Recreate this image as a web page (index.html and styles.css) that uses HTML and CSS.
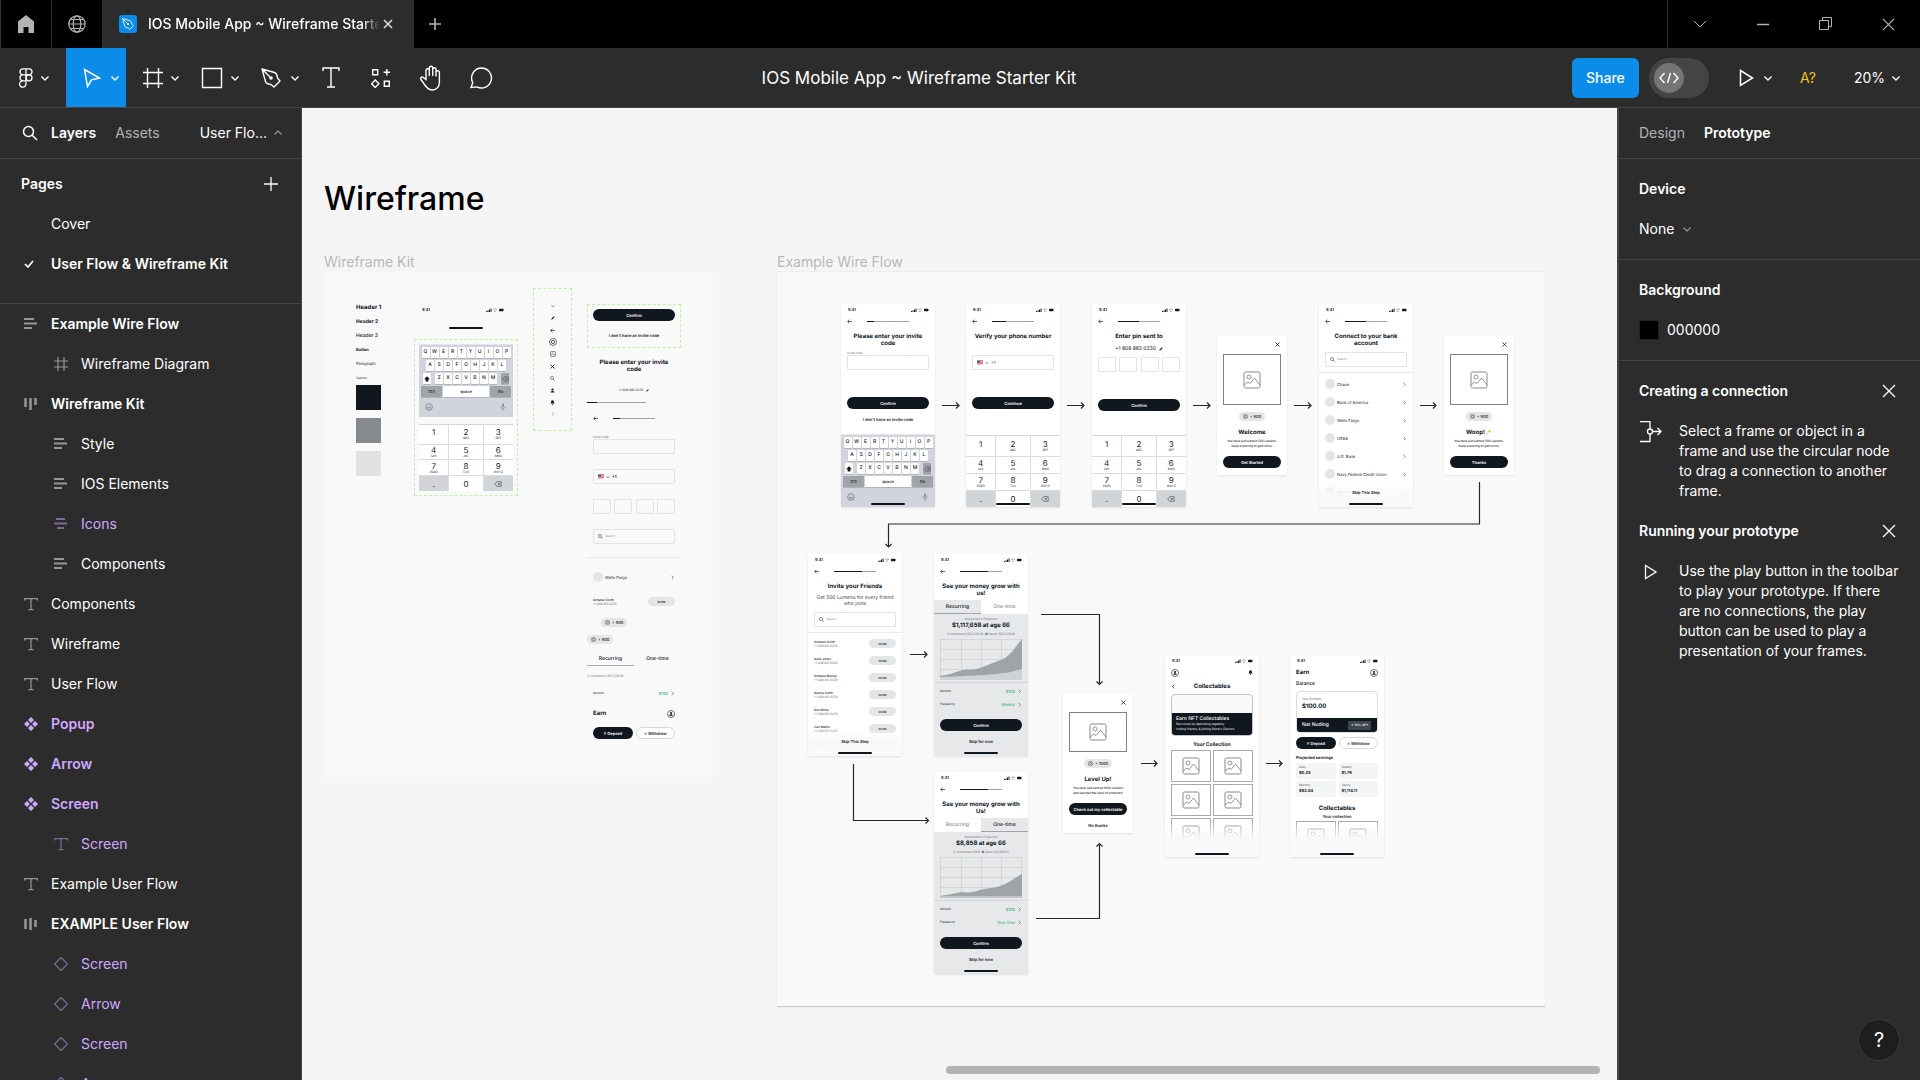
FILE: index.html
```html
<!DOCTYPE html>
<html lang="en">
<head>
<meta charset="utf-8">
<title>IOS Mobile App ~ Wireframe Starter Kit</title>
<link rel="stylesheet" href="styles.css">
</head>
<body>
<svg class="defs" aria-hidden="true">
  <symbol id="chev" viewBox="0 0 10 10"><path d="M1.5 3.5 5 7l3.500-3.500" fill="none" stroke="currentColor" stroke-width="1.400"/></symbol>
  <symbol id="x" viewBox="0 0 14 14"><path d="M1 1l12 12M13 1L1 13" fill="none" stroke="currentColor" stroke-width="1.300"/></symbol>
  <symbol id="plus" viewBox="0 0 14 14"><path d="M7 0v14M0 7h14" fill="none" stroke="currentColor" stroke-width="1.300"/></symbol>
  <symbol id="left" viewBox="0 0 14 12"><path d="M0 1h10M0 5.500h13M0 10h8" fill="none" stroke="currentColor" stroke-width="2"/></symbol>
  <symbol id="mid" viewBox="0 0 14 12"><path d="M2 1h9M0 5.500h13M3 10h7" fill="none" stroke="currentColor" stroke-width="2"/></symbol>
  <symbol id="cols" viewBox="0 0 14 12"><path d="M1.500 0v9M6.500 0v12M11.500 0v7" fill="none" stroke="currentColor" stroke-width="2.500"/></symbol>
  <symbol id="colsmid" viewBox="0 0 14 12"><path d="M1.500 1v10M6.500 0v12M11.500 2v7" fill="none" stroke="currentColor" stroke-width="2.500"/></symbol>
  <symbol id="hash" viewBox="0 0 14 14"><path d="M4 0v14M10 0v14M0 4h14M0 10h14" fill="none" stroke="currentColor" stroke-width="1.200"/></symbol>
  <symbol id="tee" viewBox="0 0 14 14"><path d="M.6 3.500V1.600h12.800v1.900M7 1.600v11M4.500 12.600h5" fill="none" stroke="currentColor" stroke-width="1.200"/></symbol>
  <symbol id="comp" viewBox="0 0 14 14"><path d="M7 0l3 3-3 3-3-3zM7 8l3 3-3 3-3-3zM3 4l3 3-3 3-3-3zM11 4l3 3-3 3-3-3z" fill="currentColor"/></symbol>
  <symbol id="inst" viewBox="0 0 14 14"><path d="M7 .5L13.500 7 7 13.500.5 7z" fill="none" stroke="currentColor" stroke-width="1.200"/></symbol>
  <symbol id="play" viewBox="0 0 14 18"><path d="M1 1.500L13 9 1 16.500z" fill="none" stroke="currentColor" stroke-width="1.500"/></symbol>
  <symbol id="pen" viewBox="0 0 20 20"><path d="M1 1l3.500 12.500c.5 1.800 2 2.600 5.500 3l3 2.500 6-6-2.500-3c-.4-3.500-1.200-5-3-5.500zM1 1l8 8" fill="none" stroke="currentColor" stroke-width="1.400" stroke-linejoin="round"/><circle cx="10" cy="10" r="1.800" fill="currentColor"/></symbol>
  <symbol id="search" viewBox="0 0 16 16"><circle cx="6.500" cy="6.500" r="5" fill="none" stroke="currentColor" stroke-width="1.500"/><path d="M10.200 10.200L15 15" stroke="currentColor" stroke-width="1.500"/></symbol>
  <symbol id="signal" viewBox="0 0 18 4"><path d="M0 4V3h1v1zM1.500 4V2.200h1V4zM3 4V1.400h1V4zM4.500 4V.5h1V4z" fill="#10171f"/><path d="M7 2c1.500-1.500 3-1.500 4 0M8 3.200h2" fill="none" stroke="#8a8f95" stroke-width=".8"/><rect x="13" y=".7" width="4.500" height="2.600" rx=".7" fill="#10171f"/></symbol>
  <symbol id="back" viewBox="0 0 6 6"><path d="M6 3H1M3 .8L.8 3 3 5.200" fill="none" stroke="#10171f" stroke-width=".8"/></symbol>
  <symbol id="pic" viewBox="0 0 18 18"><rect x="1" y="1" width="16" height="16" rx="1.500" fill="none" stroke="#858a8d" stroke-width="1"/><circle cx="6" cy="6" r="2" fill="none" stroke="#858a8d" stroke-width=".9"/><path d="M1 14l4-3 2 1.500L11.500 7l5.500 7" fill="none" stroke="#858a8d" stroke-width=".9"/></symbol>
  <symbol id="picsm" viewBox="0 0 6 6"><rect x=".6" y=".6" width="4.800" height="4.800" rx=".5" fill="none" stroke="#555b60" stroke-width=".7"/><path d="M1 4l1.500-1 2.500 1M2 2h1" fill="none" stroke="#555b60" stroke-width=".6"/></symbol>
  <symbol id="user" viewBox="0 0 8 8"><circle cx="4" cy="4" r="3.500" fill="none" stroke="#10171f" stroke-width=".6"/><circle cx="4" cy="3" r="1" fill="#10171f"/><path d="M2.200 5.700c0-2 3.600-2 3.600 0z" fill="#10171f"/></symbol>
  <symbol id="person" viewBox="0 0 5 5"><circle cx="2.500" cy="1.500" r="1.100" fill="#10171f"/><path d="M.5 4.600c0-2.300 4-2.300 4 0z" fill="#10171f"/></symbol>
  <symbol id="coin" viewBox="0 0 8 8"><circle cx="4" cy="4" r="3.500" fill="none" stroke="#30363c" stroke-width=".7"/><circle cx="4" cy="4" r="1.600" fill="none" stroke="#30363c" stroke-width=".8"/></symbol>
  <symbol id="del" viewBox="0 0 9 7"><path d="M.6 3.500L3 .8h5.200v5.400H3zM4.300 2.200l2.500 2.600M6.800 2.200L4.300 4.800" fill="none" stroke="#3d4348" stroke-width=".7"/></symbol>
  <symbol id="face" viewBox="0 0 8 8"><circle cx="4" cy="4" r="3.400" fill="none" stroke="#70757d" stroke-width=".7"/><path d="M2.200 4.500h3.600c-.4 2-3.200 2-3.600 0M2.800 2.500v.8M5.200 2.500v.8" fill="none" stroke="#70757d" stroke-width=".6"/></symbol>
  <symbol id="mic" viewBox="0 0 8 8"><rect x="3" y=".5" width="2" height="4" rx="1" fill="#8c919a"/><path d="M1.800 3.500c0 3 4.400 3 4.400 0M4 5.800v2" fill="none" stroke="#70757d" stroke-width=".6"/></symbol>
  <symbol id="shift" viewBox="0 0 6 6"><path d="M3 .3L5.900 3.200H4.400v2.300H1.600V3.200H.1z" fill="#10171f"/></symbol>
  <symbol id="flag" viewBox="0 0 6 5"><path d="M0 .8l6-.6v3.800l-6 .6z" fill="#f3c8c8"/><path d="M0 1l6-.5M0 2.500L6 2M0 4.100l6-.6" stroke="#d4504f" stroke-width=".8"/><path d="M0 .8l3-.3v2L0 2.800z" fill="#3d5fa8"/></symbol>
  <symbol id="pencil" viewBox="0 0 5 5"><path d="M.3 4.700l.5-1.600L3.600.4l1 1-2.800 2.800z" fill="#10171f"/></symbol>
  <symbol id="bell" viewBox="0 0 5 5"><path d="M2.500.2c1.300 0 1.500 1 1.500 2.300l.6 1H.4l.6-1C1 1.200 1.200.2 2.500.2zM1.900 4h1.200v.8H1.900z" fill="#10171f"/></symbol>
</svg>

<header class="tabs">
  <button class="tab-ico" aria-label="Home"><svg width="16" height="18" viewBox="0 0 16 18"><path d="M8 0l8 6.500V18h-5.500v-6h-5v6H0V6.500z" fill="#b3b3b3"/></svg></button>
  <button class="tab-ico" aria-label="Community"><svg width="18" height="18" viewBox="0 0 18 18" fill="none" stroke="#b3b3b3" stroke-width="1.200"><circle cx="9" cy="9" r="8.200"/><ellipse cx="9" cy="9" rx="3.800" ry="8.200"/><path d="M1 9h16M2.500 4.500h13M2.500 13.500h13" stroke-width="1"/></svg></button>
  <div class="tab">
    <span class="tab-logo"><svg width="12" height="12"><use href="#pen"/></svg></span>
    <span class="tab-name">IOS Mobile App ~ Wireframe Starter Kit</span>
    <button class="tab-x" aria-label="Close tab"><svg width="10" height="10" viewBox="0 0 10 10"><path d="M1 1l8 8M9 1L1 9" stroke="#d9d9d9" stroke-width="1.700"/></svg></button>
  </div>
  <button class="tab-new" aria-label="New tab"><svg width="12" height="12" viewBox="0 0 12 12"><path d="M6 0v12M0 6h12" stroke="#b3b3b3" stroke-width="1.600"/></svg></button>
  <nav class="win">
    <button aria-label="Tabs"><svg width="14" height="10" viewBox="0 0 14 10" fill="none" stroke="#b3b3b3"><path d="M1 2l6 6 6-6"/></svg></button>
    <button aria-label="Minimize"><svg width="12" height="10" viewBox="0 0 12 10"><path d="M0 5.500h12" stroke="#b3b3b3" stroke-width="1.500"/></svg></button>
    <button aria-label="Restore"><svg width="14" height="14" viewBox="0 0 14 14" fill="none" stroke="#b3b3b3"><path d="M.5 3.500h9v9h-9zM3.500 3V.5h9v9H10"/></svg></button>
    <button aria-label="Close"><svg width="13" height="13" color="#b3b3b3"><use href="#x"/></svg></button>
  </nav>
</header>

<div class="toolbar">
  <button class="tool menu" aria-label="Main menu"><svg width="14" height="20" viewBox="0 0 14 20" fill="none" stroke="#fff" stroke-width="1.300"><path d="M7 .8H4a3 3 0 000 6h3zM7 .8h3a3 3 0 010 6H7zM7 6.800H4a3 3 0 000 6h3zM7 12.800H4a3.200 3.200 0 103 3.200z"/><circle cx="10" cy="9.800" r="3"/></svg><svg width="10" height="10"><use href="#chev"/></svg></button>
  <button class="tool on" aria-label="Move"><svg width="18" height="20" viewBox="0 0 18 20"><path d="M1.500 1.500l15 8.500-8 1.800-4 6.700z" fill="none" stroke="#fff" stroke-width="1.500"/></svg><svg width="10" height="10"><use href="#chev"/></svg></button>
  <button class="tool near" aria-label="Frame"><svg width="20" height="20" viewBox="0 0 20 20"><path d="M4.500 0v20M15.500 0v20M0 4.500h20M0 15.500h20" stroke="#fff" stroke-width="1.400"/></svg><svg width="10" height="10"><use href="#chev"/></svg></button>
  <button class="tool near" aria-label="Rectangle"><svg width="22" height="22" viewBox="0 0 22 22"><path d="M1.500 1.500h19v19h-19z" fill="none" stroke="#fff" stroke-width="1.400"/></svg><svg width="10" height="10"><use href="#chev"/></svg></button>
  <button class="tool" aria-label="Pen"><svg width="20" height="20"><use href="#pen"/></svg><svg width="10" height="10"><use href="#chev"/></svg></button>
  <button class="tool one" aria-label="Text"><svg width="18" height="21" viewBox="0 0 18 21"><path d="M1 4V1h16v3M9 1v19M5 20h8" fill="none" stroke="#fff" stroke-width="1.400"/></svg></button>
  <button class="tool one" aria-label="Resources"><svg width="20" height="20" viewBox="0 0 20 20" fill="none" stroke="#fff" stroke-width="1.400"><path d="M1.700 1.700h5v5h-5zM13.300 13.300h5v5h-5zM15.800 1v6.400M12.600 4.200H19M4.200 12l3.700 3.800-3.700 3.700L.6 15.800z"/></svg></button>
  <button class="tool one" aria-label="Hand"><svg width="24" height="26" viewBox="0 0 24 26" fill="none" stroke="#fff" stroke-width="1.400"><path d="M7 14.500V5a1.700 1.700 0 013.300 0V11 3a1.700 1.700 0 013.400 0v8V4a1.700 1.700 0 013.300 0v7.500V7.500a1.700 1.700 0 013.400 0V17c0 5-3 8-7 8s-5.500-2-7.500-5l-4-5.500c-1-1.800 1-3.200 2.500-2z"/></svg></button>
  <button class="tool one" aria-label="Comment"><svg width="24" height="22" viewBox="0 0 24 22"><path d="M12.500 1a10 10 0 11-4.600 18.900L2 20.500l1.800-4.800A10 10 0 0112.500 1z" fill="none" stroke="#fff" stroke-width="1.400"/></svg></button>
  <h1 class="doc">IOS Mobile App ~ Wireframe Starter Kit</h1>
  <div class="right-tools">
    <button class="share">Share</button>
    <button class="dev" aria-label="Dev Mode"><span class="knob"><svg width="20" height="12" viewBox="0 0 20 12" fill="none" stroke="#fff" stroke-width="1.400"><path d="M5.500 1L1 6l4.500 5M14.500 1L19 6l-4.500 5M11.500 1l-3 10"/></svg></span></button>
    <button class="tool present" aria-label="Present"><svg width="15" height="18"><use href="#play"/></svg><svg width="10" height="10"><use href="#chev"/></svg></button>
    <button class="fonts">A?</button>
    <button class="zoom">20%<svg width="10" height="10"><use href="#chev"/></svg></button>
  </div>
</div>

<main class="work">
<aside class="side">
  <div class="side-head">
    <svg width="16" height="16"><use href="#search"/></svg>
    <button class="b">Layers</button><button class="dim">Assets</button>
    <button class="page-pick">User Flo...<svg class="up" width="10" height="10"><use href="#chev"/></svg></button>
  </div>
  <section class="pages">
    <div class="pages-top"><h2>Pages</h2><button aria-label="Add page"><svg width="14" height="14"><use href="#plus"/></svg></button></div>
    <button class="page"><span class="tick"></span>Cover</button>
    <button class="page b"><span class="tick"><svg width="10" height="8" viewBox="0 0 10 8"><path d="M1 4l3 3 5-6" fill="none" stroke="#fff" stroke-width="1.700"/></svg></span>User Flow &amp; Wireframe Kit</button>
  </section>
  <ul class="layers">
    <li class="b"><svg><use href="#left"/></svg>Example Wire Flow</li>
    <li class="in"><svg><use href="#hash"/></svg>Wireframe Diagram</li>
    <li class="b"><svg><use href="#cols"/></svg>Wireframe Kit</li>
    <li class="in"><svg><use href="#left"/></svg>Style</li>
    <li class="in"><svg><use href="#left"/></svg>IOS Elements</li>
    <li class="in pur"><svg><use href="#mid"/></svg>Icons</li>
    <li class="in"><svg><use href="#left"/></svg>Components</li>
    <li><svg><use href="#tee"/></svg>Components</li>
    <li><svg><use href="#tee"/></svg>Wireframe</li>
    <li><svg><use href="#tee"/></svg>User Flow</li>
    <li class="b pur full"><svg><use href="#comp"/></svg>Popup</li>
    <li class="b pur full"><svg><use href="#comp"/></svg>Arrow</li>
    <li class="b pur full"><svg><use href="#comp"/></svg>Screen</li>
    <li class="in pur"><svg><use href="#tee"/></svg>Screen</li>
    <li><svg><use href="#tee"/></svg>Example User Flow</li>
    <li class="b"><svg><use href="#colsmid"/></svg>EXAMPLE User Flow</li>
    <li class="in pur"><svg><use href="#inst"/></svg>Screen</li>
    <li class="in pur"><svg><use href="#inst"/></svg>Arrow</li>
    <li class="in pur"><svg><use href="#inst"/></svg>Screen</li>
    <li class="in pur"><svg><use href="#inst"/></svg>Arrow</li>
  </ul>
</aside>

<section class="canvas">
  <h2 class="big">Wireframe</h2>
  <span class="label kit-label">Wireframe Kit</span>
  <span class="label flow-label">Example Wire Flow</span>

  <div class="frame kit">
    <div class="styles">
      <p class="h1">Header 1</p><p class="h2">Header 2</p><p class="h3">Header 3</p><p class="bt">Button</p><p class="pa">Paragraph</p><p class="ca">Caption</p>
      <i class="sw ink"></i><i class="sw mid"></i><i class="sw pale"></i>
    </div>
    <div class="ios">
      <div class="stat"><b>9:41</b><svg width="18" height="4"><use href="#signal"/></svg></div>
      <i class="home"></i>
      <div class="dash">
        <div class="kb"><div><b>Q</b><b>W</b><b>E</b><b>R</b><b>T</b><b>Y</b><b>U</b><b>I</b><b>O</b><b>P</b></div><div><b>A</b><b>S</b><b>D</b><b>F</b><b>G</b><b>H</b><b>J</b><b>K</b><b>L</b></div><div><b><svg width="6" height="6"><use href="#shift"/></svg></b><b class="gp">Z</b><b>X</b><b>C</b><b>V</b><b>B</b><b>N</b><b>M</b><b class="dk gp"><svg width="7" height="6"><use href="#del"/></svg></b></div><div class="sp"><b class="dk">123</b><b class="space">space</b><b class="dk">Go</b></div><div class="end"><svg width="8" height="8"><use href="#face"/></svg><svg width="8" height="8"><use href="#mic"/></svg></div></div>
        <div class="pad"><span>1</span><span>2<small>ABC</small></span><span>3<small>DEF</small></span><span>4<small>GHI</small></span><span>5<small>JKL</small></span><span>6<small>MNO</small></span><span>7<small>PQRS</small></span><span>8<small>TUV</small></span><span>9<small>WXYZ</small></span><span class="dk">.</span><span>0</span><span class="dk"><svg width="8" height="6"><use href="#del"/></svg></span></div>
      </div>
    </div>
    <div class="icons">
      <svg width="4" height="4"><use href="#chev"/></svg><svg width="4" height="4"><use href="#pencil"/></svg><svg width="5" height="5"><use href="#back"/></svg><svg width="8" height="8"><use href="#coin"/></svg><svg width="6" height="6"><use href="#picsm"/></svg><svg width="5" height="5" viewBox="0 0 5 5"><path d="M.5.5l4 4M4.500.5l-4 4" stroke="#10171f" stroke-width=".8"/></svg><svg width="5" height="5"><use href="#search"/></svg><svg width="5" height="5"><use href="#person"/></svg><svg width="5" height="5"><use href="#bell"/></svg><svg class="rt" width="4" height="4"><use href="#chev"/></svg>
    </div>
    <div class="parts">
      <div class="dash2"><button class="pill">Confirm</button><a class="link" href="#">I don't have an invite code</a></div>
      <h3 class="ttl">Please enter your invite code</h3>
      <p class="num sm">+1 808 883 0330 <svg width="3" height="3"><use href="#pencil"/></svg></p>
      <i class="bar wide"></i>
      <div class="nav in6"><svg width="5" height="5"><use href="#back"/></svg><i class="bar p15"></i></div>
      <label class="fld in6 g10">Invite code<input class="box"></label>
      <div class="tel in6"><svg width="6" height="5"><use href="#flag"/></svg><svg width="4" height="4"><use href="#chev"/></svg><b>+1</b></div>
      <div class="pins in6"><input aria-label="Digit 1"><input aria-label="Digit 2"><input aria-label="Digit 3"><input aria-label="Digit 4"></div>
      <label class="find in6"><svg width="5" height="5"><use href="#search"/></svg><input placeholder="Search" aria-label="Search"></label>
      <hr>
      <div class="bank in6"><i></i>Wells Fargo<svg class="rt" width="5" height="5"><use href="#chev"/></svg></div>
      <div class="friend in6"><span><b>Annabel Smith</b>+1 209 813 0274</span><button>Invite</button></div>
      <span class="chip off"><svg width="5" height="5"><use href="#coin"/></svg>+ 500</span>
      <span class="chip"><svg width="5" height="5"><use href="#coin"/></svg>+ 500</span>
      <div class="seg plain"><b>Recurring</b><b>One-time</b></div>
      <p class="leg">○ Investment $50,278.06</p>
      <div class="opt in6">Amount<em>$100</em><svg class="rt" width="5" height="5"><use href="#chev"/></svg></div>
      <div class="who in6"><b>Earn</b><svg width="8" height="8"><use href="#user"/></svg></div>
      <div class="duo in6"><button class="pill">↗ Deposit</button><button class="pill ghost">↘ Withdraw</button></div>
    </div>
  </div>

  <div class="frame flow">
    <svg class="wires" width="768" height="734" viewBox="777 272 768 734" fill="none" stroke="#26292c" stroke-width="1.200">
      <path d="M942 405.500h17M956 402.500l3 3-3 3M1067 405.500h17M1081 402.500l3 3-3 3M1193 405.500h17M1207 402.500l3 3-3 3M1294 405.500h17M1308 402.500l3 3-3 3M1420 405.500h16M1433 402.500l3 3-3 3"/>
      <path d="M1479.500 482v42H888.500v23M885.500 544l3 3 3-3M910 654.500h17M924 651.500l3 3-3 3M1041 614.500h58.500v70M1096.500 681.500l3 3 3-3M853.500 764v56.500h75M925.500 817.500l3 3-3 3M1036 918.500h63.500V843M1096.500 846.500l3-3 3 3M1141 763.500h16M1154 760.500l3 3-3 3M1266 763.500h16M1279 760.500l3 3-3 3"/>
    </svg>

    <article class="phone s1">
      <div class="stat"><b>9:41</b><svg width="18" height="4"><use href="#signal"/></svg></div>
      <div class="nav"><svg width="5" height="5"><use href="#back"/></svg><i class="bar p15"></i></div>
      <h3 class="ttl">Please enter your invite code</h3>
      <label class="fld g4">Invite code<input class="box"></label>
      <button class="pill g27">Confirm</button>
      <a class="link" href="#">I don't have an invite code</a>
      <div class="kb"><div><b>Q</b><b>W</b><b>E</b><b>R</b><b>T</b><b>Y</b><b>U</b><b>I</b><b>O</b><b>P</b></div><div><b>A</b><b>S</b><b>D</b><b>F</b><b>G</b><b>H</b><b>J</b><b>K</b><b>L</b></div><div><b><svg width="6" height="6"><use href="#shift"/></svg></b><b class="gp">Z</b><b>X</b><b>C</b><b>V</b><b>B</b><b>N</b><b>M</b><b class="dk gp"><svg width="7" height="6"><use href="#del"/></svg></b></div><div class="sp"><b class="dk">123</b><b class="space">space</b><b class="dk">Go</b></div><div class="end"><svg width="8" height="8"><use href="#face"/></svg><svg width="8" height="8"><use href="#mic"/></svg></div></div>
      <i class="home over"></i>
    </article>

    <article class="phone s2">
      <div class="stat"><b>9:41</b><svg width="18" height="4"><use href="#signal"/></svg></div>
      <div class="nav"><svg width="5" height="5"><use href="#back"/></svg><i class="bar p33"></i></div>
      <h3 class="ttl">Verify your phone number</h3>
      <div class="tel g15"><svg width="6" height="5"><use href="#flag"/></svg><svg width="4" height="4"><use href="#chev"/></svg>+1</div>
      <button class="pill g27">Continue</button>
      <div class="pad"><span>1</span><span>2<small>ABC</small></span><span>3<small>DEF</small></span><span>4<small>GHI</small></span><span>5<small>JKL</small></span><span>6<small>MNO</small></span><span>7<small>PQRS</small></span><span>8<small>TUV</small></span><span>9<small>WXYZ</small></span><span class="dk">.</span><span>0</span><span class="dk"><svg width="8" height="6"><use href="#del"/></svg></span></div>
      <i class="home over"></i>
    </article>

    <article class="phone s3">
      <div class="stat"><b>9:41</b><svg width="18" height="4"><use href="#signal"/></svg></div>
      <div class="nav"><svg width="5" height="5"><use href="#back"/></svg><i class="bar p50"></i></div>
      <h3 class="ttl">Enter pin sent to</h3>
      <p class="num">+1 808 883 0330 <svg width="4" height="4"><use href="#pencil"/></svg></p>
      <div class="pins"><input aria-label="Digit 1"><input aria-label="Digit 2"><input aria-label="Digit 3"><input aria-label="Digit 4"></div>
      <button class="pill g27">Confirm</button>
      <div class="pad"><span>1</span><span>2<small>ABC</small></span><span>3<small>DEF</small></span><span>4<small>GHI</small></span><span>5<small>JKL</small></span><span>6<small>MNO</small></span><span>7<small>PQRS</small></span><span>8<small>TUV</small></span><span>9<small>WXYZ</small></span><span class="dk">.</span><span>0</span><span class="dk"><svg width="8" height="6"><use href="#del"/></svg></span></div>
      <i class="home over"></i>
    </article>

    <article class="pop s4">
      <button class="close" aria-label="Close"><svg width="5" height="5" viewBox="0 0 5 5"><path d="M.5.5l4 4M4.500.5l-4 4" stroke="#10171f" stroke-width=".8"/></svg></button>
      <div class="img"><svg width="18" height="18"><use href="#pic"/></svg></div>
      <span class="chip"><svg width="5" height="5"><use href="#coin"/></svg>+ 500</span>
      <h3>Welcome</h3>
      <p>You have just earned 500 Lumens. Keep exploring to gain more.</p>
      <button class="pill">Get Started</button>
    </article>

    <article class="phone s5">
      <div class="stat"><b>9:41</b><svg width="18" height="4"><use href="#signal"/></svg></div>
      <div class="nav"><svg width="5" height="5"><use href="#back"/></svg><i class="bar p50"></i></div>
      <h3 class="ttl">Connect to your bank account</h3>
      <label class="find"><svg width="5" height="5"><use href="#search"/></svg><input placeholder="Search" aria-label="Search bank"></label>
      <hr>
      <div class="bank"><i></i>Chase<svg class="rt" width="5" height="5"><use href="#chev"/></svg></div>
      <div class="bank"><i></i>Bank of America<svg class="rt" width="5" height="5"><use href="#chev"/></svg></div>
      <div class="bank"><i></i>Wells Fargo<svg class="rt" width="5" height="5"><use href="#chev"/></svg></div>
      <div class="bank"><i></i>USAA<svg class="rt" width="5" height="5"><use href="#chev"/></svg></div>
      <div class="bank"><i></i>U.S. Bank<svg class="rt" width="5" height="5"><use href="#chev"/></svg></div>
      <div class="bank"><i></i>Navy Federal Credit Union<svg class="rt" width="5" height="5"><use href="#chev"/></svg></div>
      <div class="bank"><i></i>Wells Fargo<svg class="rt" width="5" height="5"><use href="#chev"/></svg></div>
      <div class="fade">Skip This Step</div>
      <i class="home over"></i>
    </article>

    <article class="pop s6">
      <button class="close" aria-label="Close"><svg width="5" height="5" viewBox="0 0 5 5"><path d="M.5.5l4 4M4.500.5l-4 4" stroke="#10171f" stroke-width=".8"/></svg></button>
      <div class="img"><svg width="18" height="18"><use href="#pic"/></svg></div>
      <span class="chip"><svg width="5" height="5"><use href="#coin"/></svg>+ 500</span>
      <h3>Woop! <svg width="6" height="6" viewBox="0 0 6 6"><path d="M3.500 0l.6 2 1.900.5-1.900.6-.6 2-.6-2L1 2.500 2.900 2zM1 3.500l.3 1 1 .3-1 .4-.3.800-.3-.8-.7-.4.700-.3z" fill="#f5c542"/></svg></h3>
      <p>You have just earned 500 Lumens. Keep exploring to gain more.</p>
      <button class="pill">Thanks</button>
    </article>

    <article class="phone short s7">
      <div class="stat"><b>9:41</b><svg width="18" height="4"><use href="#signal"/></svg></div>
      <div class="nav"><svg width="5" height="5"><use href="#back"/></svg><i class="bar p66"></i></div>
      <h3 class="ttl">Invite your Friends</h3>
      <p class="sub">Get 500 Lumens for every friend who joins</p>
      <label class="find"><svg width="5" height="5"><use href="#search"/></svg><input placeholder="Search" aria-label="Search friends"></label>
      <hr>
      <div class="friend"><span><b>Annabel Smith</b>+1 209 813 0274</span><button>Invite</button></div>
      <div class="friend"><span><b>Aarik Jones</b>+1 209 813 0274</span><button>Invite</button></div>
      <div class="friend"><span><b>Annabel Murray</b>+1 209 813 0274</span><button>Invite</button></div>
      <div class="friend"><span><b>Bianca Smith</b>+1 209 813 0274</span><button>Invite</button></div>
      <div class="friend"><span><b>Ben White</b>+1 209 813 0274</span><button>Invite</button></div>
      <div class="friend"><span><b>Carl Martin</b>+1 209 813 0274</span><button>Invite</button></div>
      <div class="friend"><span><b>Annabel Smith</b>+1 209 813 0274</span><button>Invite</button></div>
      <div class="fade">Skip This Step</div>
      <i class="home over"></i>
    </article>

    <article class="phone short grey s8">
      <div class="stat"><b>9:41</b><svg width="18" height="4"><use href="#signal"/></svg></div>
      <div class="nav"><svg width="5" height="5"><use href="#back"/></svg><i class="bar p66"></i></div>
      <h3 class="ttl">See your money grow with us!</h3>
      <div class="seg"><b class="sel">Recurring</b><b>One-time</b></div>
      <p class="leg c">Appreciation Projection</p>
      <h3 class="sum">$1,117,658 at age 66</h3>
      <p class="leg c">○ Investment $50,278.06 &nbsp;● Return $50,278.06</p>
      <svg class="chart" width="82" height="41" viewBox="0 0 82 41"><path d="M.5 0v41M21.500 0v41M41.500 0v41M61.500 0v41M0 .5h82M0 10.500h82M0 20.500h82M0 30.500h82M81.500 0v41" stroke="#cfd2d4" stroke-width=".8"/><path d="M0 37C30 39 60 34 82 29V41H0z" fill="#cfd3d5"/><path d="M0 37c9-1 15-4 23-6 7-1 12 0 17-2 8-3 15-6 23-9 8-4 12-12 19-20v30c-8 2-12 4-19 4-20 3-40 3-63 4z" fill="#9fa5a7"/></svg>
      <hr>
      <div class="opt">Amount<em>$100</em><svg class="rt" width="5" height="5"><use href="#chev"/></svg></div>
      <div class="opt">Frequency<em>Weekly</em><svg class="rt" width="5" height="5"><use href="#chev"/></svg></div>
      <button class="pill g8">Confirm</button>
      <a class="link" href="#">Skip for now</a>
      <i class="home over"></i>
    </article>

    <article class="phone short grey s9">
      <div class="stat"><b>9:41</b><svg width="18" height="4"><use href="#signal"/></svg></div>
      <div class="nav"><svg width="5" height="5"><use href="#back"/></svg><i class="bar p66"></i></div>
      <h3 class="ttl">See your money grow with Us!</h3>
      <div class="seg"><b>Recurring</b><b class="sel">One-time</b></div>
      <p class="leg c">Appreciation Projection</p>
      <h3 class="sum">$8,858 at age 66</h3>
      <p class="leg c">○ Investment $100 &nbsp;● Return $1,060.87</p>
      <svg class="chart" width="82" height="41" viewBox="0 0 82 41"><path d="M.5 0v41M21.500 0v41M41.500 0v41M61.500 0v41M0 .5h82M0 10.500h82M0 20.500h82M0 30.500h82M81.500 0v41" stroke="#cfd2d4" stroke-width=".8"/><path d="M0 39h82v2H0z" fill="#c3c7c9"/><path d="M0 39c9-1 15-3 22-4 7 1 12 0 18-2 8-2 14-2 20-4 9-3 14-8 22-12v22z" fill="#9fa5a7"/></svg>
      <hr>
      <div class="opt">Amount<em>$100</em><svg class="rt" width="5" height="5"><use href="#chev"/></svg></div>
      <div class="opt">Frequency<em>One-time</em><svg class="rt" width="5" height="5"><use href="#chev"/></svg></div>
      <button class="pill g8">Confirm</button>
      <a class="link" href="#">Skip for now</a>
      <i class="home over"></i>
    </article>

    <article class="pop s10">
      <button class="close" aria-label="Close"><svg width="5" height="5" viewBox="0 0 5 5"><path d="M.5.5l4 4M4.500.5l-4 4" stroke="#10171f" stroke-width=".8"/></svg></button>
      <div class="img low"><svg width="18" height="18"><use href="#pic"/></svg></div>
      <span class="chip"><svg width="5" height="5"><use href="#coin"/></svg>+ 1000</span>
      <h3>Level Up!</h3>
      <p>You have just earned 1000 Lumens and reached the level of protector!</p>
      <button class="pill">Check out my collectable</button>
      <a class="link" href="#">No thanks</a>
    </article>

    <article class="phone short s11">
      <div class="stat"><b>9:41</b><svg width="18" height="4"><use href="#signal"/></svg></div>
      <div class="who"><svg width="8" height="8"><use href="#user"/></svg><svg width="5" height="5"><use href="#bell"/></svg></div>
      <h3 class="ttl one"><svg class="lt" width="5" height="5"><use href="#chev"/></svg>Collectables</h3>
      <div class="card nft"><div class="dark"><b>Earn NFT Collectables</b>Earn more by depositing regularly,<br>inviting friends, &amp; joining Boost's Discord</div></div>
      <h4>Your Collection</h4>
      <div class="cells"><i><svg width="18" height="18"><use href="#pic"/></svg></i><i><svg width="18" height="18"><use href="#pic"/></svg></i><i><svg width="18" height="18"><use href="#pic"/></svg></i><i><svg width="18" height="18"><use href="#pic"/></svg></i><i><svg width="18" height="18"><use href="#pic"/></svg></i><i><svg width="18" height="18"><use href="#pic"/></svg></i></div>
      <div class="fade tall"></div>
      <i class="home over"></i>
    </article>

    <article class="phone short s12">
      <div class="stat"><b>9:41</b><svg width="18" height="4"><use href="#signal"/></svg></div>
      <div class="who"><b>Earn</b><svg width="8" height="8"><use href="#user"/></svg></div>
      <h5>Balance</h5>
      <div class="card bal"><small>Your Portfolio</small><b>$100.00</b><div class="dark"><span>Nat Nuding</span><em>✦ 30% APY</em></div></div>
      <div class="duo"><button class="pill">↗ Deposit</button><button class="pill ghost">↘ Withdraw</button></div>
      <h6>Projected earnings</h6>
      <div class="stats"><span>Daily<b>$0.25</b></span><span>Weekly<b>$1.76</b></span><span>Monthly<b>$92.84</b></span><span>Yearly<b>$1,114.11</b></span></div>
      <h3 class="col">Collectables</h3>
      <p class="yc">Your collection</p>
      <div class="cells"><i><svg width="18" height="18"><use href="#pic"/></svg></i><i><svg width="18" height="18"><use href="#pic"/></svg></i></div>
      <div class="fade tall"></div>
      <i class="home over"></i>
    </article>
  </div>
  <i class="scroll"></i>
</section>

<aside class="props">
  <div class="side-head"><button class="dim">Design</button><button class="b">Prototype</button></div>
  <section><h2>Device</h2><button class="row">None<svg class="faint" width="10" height="10"><use href="#chev"/></svg></button></section>
  <section><h2>Background</h2><button class="row"><i class="swatch"></i>000000</button></section>
  <section class="tips">
    <h2>Creating a connection<button aria-label="Dismiss"><svg width="14" height="14"><use href="#x"/></svg></button></h2>
    <div class="tip"><svg width="24" height="24" viewBox="0 0 24 24" fill="none" stroke="#fff" stroke-width="1.300"><path d="M1 .5h10V8M11 13v7.500H1M13.500 10.500H22M18.500 7l3.500 3.500-3.500 3.500"/><circle cx="11" cy="10.500" r="2.500"/></svg><p>Select a frame or object in a frame and use the circular node to drag a connection to another frame.</p></div>
    <h2>Running your prototype<button aria-label="Dismiss"><svg width="14" height="14"><use href="#x"/></svg></button></h2>
    <div class="tip"><svg width="24" height="24" viewBox="0 0 24 24"><path d="M6.500 4.500v13L17 11z" fill="none" stroke="#fff" stroke-width="1.300"/></svg><p>Use the play button in the toolbar to play your prototype. If there are no connections, the play button can be used to play a presentation of your frames.</p></div>
  </section>
  <button class="help" aria-label="Help">?</button>
</aside>
</main>
</body>
</html>
```
FILE: styles.css
```css
* { box-sizing: border-box; margin: 0; padding: 0; }
body {
  height: 100vh; overflow: hidden; display: grid; grid-template-rows: 48px 60px minmax(0, 1fr);
  background: #2c2c2c; color: #fff; font: 14px/20px Inter, "Liberation Sans", sans-serif;
}
button, input { font: inherit; color: inherit; background: none; border: 0; text-align: inherit; text-rendering: inherit; }
svg { flex: none; display: block; }
.defs { position: absolute; width: 0; height: 0; }
.b, h2 { font-weight: 600; }
h2 { font-size: 14px; }
.dim { color: #b3b3b3; }

/* window tabs */
.tabs { display: flex; background: #000; border-left: 1px solid #333; }
.tabs button { display: grid; place-items: center; }
.tab-ico { width: 51px; border-right: 1px solid #333; }
.tab { width: 311px; display: flex; align-items: center; background: #2c2c2c; padding: 0 21px 0 16px; font-weight: 500; }
.tab-logo { width: 18px; height: 18px; border-radius: 3px; background: #0c8ce9; display: grid; place-items: center; }
.tab-name { flex: 1; min-width: 0; margin: 0 3px 0 11px; white-space: nowrap; overflow: hidden; -webkit-mask: linear-gradient(90deg, #000 92%, transparent); mask: linear-gradient(90deg, #000 92%, transparent); }
.tab-new { width: 42px; }
.win { margin-left: auto; display: flex; border-left: 1px solid #333; }
.win button { flex: 1; width: 63px; }

/* toolbar */
.toolbar { display: flex; border-bottom: 1px solid #444; }
.tool { width: 60px; display: flex; align-items: center; justify-content: flex-end; gap: 9px; padding-right: 6px; }
.tool.near { gap: 7px; }
.tool.menu { width: 66px; padding-right: 16px; gap: 7px; }
.tool.on { background: #0c8ce9; }
.tool.one { width: 50px; justify-content: center; padding: 0; }
.doc { flex: 1; text-align: center; font: 400 17px/60px Inter, sans-serif; white-space: nowrap; }
.right-tools { width: 588px; display: flex; align-items: center; justify-content: flex-end; padding-right: 19px; }
.share { width: 67px; height: 40px; border-radius: 6px; background: #0c8ce9; text-align: center; font-weight: 500; }
.dev { width: 60px; height: 40px; margin: 0 25px 0 10px; border-radius: 20px; background: #444; padding-left: 5px; }
.knob { width: 30px; height: 30px; border-radius: 50%; background: #757575; display: grid; place-items: center; }
.tool.present { width: 40px; padding-right: 1px; }
.fonts { width: 20px; margin: 0 34px 0 26px; color: #f2c41b; white-space: nowrap; }
.zoom { display: flex; align-items: center; gap: 6px; }

.work { display: grid; grid-template-columns: 302px minmax(0, 1fr) 303px; min-height: 0; }
.side { border-right: 1px solid #444; overflow: hidden; }
.side-head { height: 51px; display: flex; align-items: center; border-bottom: 1px solid #444; gap: 19px; padding: 0 24px 0 22px; }
.side-head svg:first-child { margin-right: -6px; }
.page-pick { margin-left: auto; display: flex; align-items: center; gap: 6px; }
.page-pick svg, .faint { color: #8c8c8c; }
.up { transform: rotate(180deg); }
.pages { height: 145px; padding-top: 5px; border-bottom: 1px solid #444; }
.pages-top { display: flex; justify-content: space-between; align-items: center; height: 40px; padding: 0 23px 0 21px; }
.page { display: flex; align-items: center; height: 40px; width: 100%; padding-left: 22px; }
.tick { width: 29px; padding-left: 2px; }
.layers { list-style: none; }
.layers li { height: 40px; display: flex; align-items: center; gap: 13px; padding-left: 24px; }
.layers li.in { padding-left: 54px; }
.layers svg { width: 14px; height: 14px; opacity: .5; }
.layers .pur { color: #d1a8ff; }
.layers .full svg { opacity: 1; }

.props { position: relative; border-left: 2px solid #444; }
.props .side-head { padding-left: 20px; }
.props section { padding: 10px 24px 10px 20px; border-bottom: 1px solid #444; }
.props h2, .row { height: 40px; display: flex; align-items: center; gap: 8px; }
.props h2 { justify-content: space-between; }
.swatch { width: 20px; height: 20px; background: #000; border: 1px solid #222; }
.props section.tips { border: 0; }
.tip { display: flex; gap: 16px; padding: 10px 0; margin-right: -8px; }
.help { position: absolute; right: 21px; bottom: 20px; width: 40px; height: 40px; border-radius: 50%; background: #1e1e1e; text-align: center; font-size: 20px; box-shadow: 0 0 0 1px #3a3a3a; }

/* canvas */
.canvas { position: relative; overflow: hidden; background: #f5f5f5; color: #10171f; }
.canvas > *, .phone, .pop, .styles, .ios, .icons, .parts { position: absolute; }
.big { left: 22px; top: 71px; font: 500 32px/40px Inter, sans-serif; color: #000; }
.label { top: 144px; color: #b8b8b8; }
.kit-label { left: 22px; }
.flow-label { left: 475px; }
.frame { background: #f9f9f9; top: 164px; }
.kit { left: 22px; width: 389px; height: 505px; }
.flow { left: 475px; width: 768px; height: 735px; border-bottom: 1px solid #ccc; box-shadow: 0 0 1px #ccc; }
.scroll { left: 644px; bottom: 6px; width: 654px; height: 8px; border-radius: 4px; background: #b3b3b3; }
.frame { font-size: 4px; line-height: 5px; text-rendering: geometricPrecision; }
.frame a { color: inherit; text-decoration: none; }

.phone, .pop { background: #fff; box-shadow: 0 1px 2px rgba(0, 0, 0, .1); display: flex; flex-direction: column; overflow: hidden; padding: 0 6px; }
.phone { width: 94px; height: 203px; }
.phone.short { height: 202px; }
.pop { width: 70px; height: 139px; align-items: center; text-align: center; }
.s1 { left: 64px; top: 32px; }
.s2 { left: 189px; top: 32px; }
.s3 { left: 315px; top: 32px; }
.s4 { left: 440px; top: 64px; }
.s5 { left: 542px; top: 32px; }
.s6 { left: 667px; top: 64px; }
.s7 { left: 31px; top: 282px; }
.s8 { left: 157px; top: 282px; }
.s9 { left: 157px; top: 500px; }
.s10 { left: 286px; top: 422px; }
.s11 { left: 388px; top: 383px; }
.s12 { left: 513px; top: 383px; }
.phone > *, .pop > * { flex: none; }

.stat { height: 11px; display: flex; align-items: center; justify-content: space-between; padding-left: 1px; }
.stat b { font-weight: 600; }
.nav { height: 13px; display: flex; align-items: center; }
.bar { width: 42px; height: 1px; margin-left: 15px; background: linear-gradient(90deg, #10171f var(--p, 17%), #9da1a5 var(--p, 17%)); }
.bar.wide { width: 59px; margin: 9px 0 1px; }
.p33 { --p: 33%; }
.p50 { --p: 50%; }
.p66 { --p: 66%; }
.ttl, .sum, .pop h3, .col { font-size: 6px; line-height: 7px; font-weight: 700; text-align: center; }
.ttl { margin-top: 5px; }
.fld { display: flex; flex-direction: column; font-size: 3px; line-height: 4px; color: #6f757a; }
.g4 { margin-top: 4px; }
.g8 { margin-top: 8px; }
.g15 { margin-top: 15px; }
.g27 { margin-top: 27px; }
.box, .tel, .find, .pins input { height: 15px; border: 1px solid #e1e3e5; border-radius: 1px; }
.tel, .find { display: flex; align-items: center; gap: 2px; padding-left: 4px; }
.find { margin-top: 5px; color: #10171f; }
.find input { width: 50px; font-size: 3px; height: 5px; }
.find input::placeholder { color: #8a8f94; }
.pins { display: flex; justify-content: space-between; margin-top: 5px; }
.pins input { width: 18px; }
.pill { height: 12px; border-radius: 6px; background: #10171f; color: #fff; font-weight: 600; text-align: center; white-space: nowrap; }
.link { font-weight: 600; text-align: center; margin-top: 8px; }
.num { display: flex; justify-content: center; align-items: center; gap: 3px; font-size: 5px; line-height: 6px; margin-top: 6px; }
.num.sm { font-size: 3px; margin-top: 14px; }
.home { width: 34px; height: 2px; border-radius: 1px; background: #10171f; }
.over { position: absolute; left: 30px; bottom: 2px; }

.kb { height: 73px; margin: auto -6px 0; padding: 2px 0; background: #d1d4dc; border-top: 1px solid #e3e6e8; display: grid; grid-template-rows: 11px 11px 11px 11px 1fr; gap: 2px; font-size: 5px; }
.kb div { display: flex; justify-content: center; gap: 1px; }
.kb b { width: 8px; background: #fff; border-radius: 1px; font-weight: 500; display: grid; place-items: center; box-shadow: 0 1px 0 #b0b4ba; }
.kb .gp { margin-left: 3px; }
.kb b.dk { background: #9ea4a8; }
.kb .sp b { width: 21px; font-size: 4px; }
.kb .sp .space { width: 46px; }
.kb div.end { justify-content: space-between; align-items: center; padding: 0 6px; }
.pad { height: 72px; margin: auto -6px 0; border-top: 1px solid #d5d9dc; display: grid; grid-template: 5fr 4fr 4fr 4fr / 30fr 34fr 30fr; background: #dadde0; gap: 1px; }
.pad span { background: #fff; display: flex; flex-direction: column; align-items: center; justify-content: center; font-size: 8px; line-height: 8px; min-height: 0; }
.pad span:first-child { padding-bottom: 4px; }
.pad small { font-size: 3px; line-height: 4px; }
.pad .dk { background: #d1d5d8; }

.close { height: 18px; align-self: flex-end; padding-right: 1px; }
.close svg { margin-bottom: 2px; }
.img { width: 58px; height: 51px; border: 1px solid #7d8183; display: grid; place-items: center; }
.img.low { height: 40px; }
.chip { height: 9px; padding: 0 4px; border-radius: 5px; background: #e3e5e6; display: flex; align-items: center; gap: 2px; align-self: center; font-weight: 500; margin-top: 7px; }
.pop h3 { margin-top: 8px; display: flex; gap: 1px; }
.pop p { font-size: 3px; font-weight: 500; margin: 3px 0 7px; padding: 0 2px; }
.pop .pill { width: 58px; }
.frame hr { border: 0; height: 1px; background: #e8eaeb; margin: 5px -6px 2px; }
.bank { height: 18px; display: flex; align-items: center; gap: 2px; }
.bank i { width: 10px; height: 10px; border-radius: 50%; background: #e3e5e6; }
.rt { transform: rotate(-90deg); margin-left: auto; color: #5b6065; }
.lt { transform: rotate(90deg); }
.fade { position: absolute; left: 0; right: 0; bottom: 0; height: 27px; padding-top: 10px; text-align: center; font-weight: 600; background: linear-gradient(rgba(249, 249, 249, 0), rgba(249, 249, 249, .9) 45%, #f9f9f9 70%); }
.fade.tall { height: 36px; }
.sub { font-size: 5px; line-height: 6px; text-align: center; margin: 5px -2px 0; color: #43484d; }
.friend { height: 17px; display: flex; align-items: center; justify-content: space-between; font-size: 3px; line-height: 4px; color: #555a60; }
.friend span, .friend b { display: block; white-space: nowrap; }
.friend b { color: #10171f; font-weight: 500; }
.friend button { width: 27px; height: 9px; border-radius: 5px; background: #e3e5e6; color: #10171f; text-align: center; font-weight: 600; }

.grey { background: linear-gradient(#fff 60px, #e6e8ea 60px); }
.seg { display: flex; margin: 3px -6px 0; }
.seg b { flex: 1; height: 14px; font-size: 5px; line-height: 14px; font-weight: 500; text-align: center; color: #8a8f94; }
.seg .sel { background: #e6e8ea; color: #10171f; border-bottom: 1px solid #9fa5a7; }
.leg { font-size: 3px; line-height: 5px; color: #6f757a; white-space: nowrap; }
.leg.c { text-align: center; margin-top: 3px; }
.leg.c + .chart { margin-top: 2px; }
.chart + hr { background: #d5d8da; }
.grey hr { margin: 2px -6px; }
.opt { height: 13px; display: flex; align-items: center; gap: 2px; font-size: 3px; }
.opt em { margin-left: auto; font-style: normal; color: #1fae5f; font-size: 4px; }
.opt .rt { margin-left: 0; }

.who { height: 13px; display: flex; align-items: center; justify-content: space-between; }
.who b { font-size: 6px; }
.ttl.one { display: grid; grid-template-columns: 5px 1fr 5px; align-items: center; margin-top: 4px; }
.card { height: 42px; margin-top: 4px; border: 1px solid #c1c4c6; border-radius: 4px; overflow: hidden; display: flex; flex-direction: column; }
.card .dark { margin-top: auto; background: #10171f; color: #fff; font-size: 3px; line-height: 5px; }
.nft { background: #f9f9f9; }
.nft .dark { height: 22px; padding: 3px 4px; }
.nft b { display: block; font-size: 5px; line-height: 6px; font-weight: 500; }
.frame h4 { font-size: 5px; line-height: 6px; text-align: center; margin: 6px 0 2px; }
.cells { display: grid; grid-template-columns: 1fr 1fr; grid-auto-rows: 32px; gap: 2px; }
.cells i { border: 1px solid #a9acae; display: grid; place-items: center; }
.frame h5 { font-size: 5px; line-height: 6px; font-weight: 500; margin-top: 2px; }
.bal { border-color: #dcdfe0; }
.bal small { font-size: 3px; padding: 5px 5px 0; color: #555; }
.bal > b { font-size: 6px; line-height: 9px; padding: 0 5px; }
.bal .dark { height: 14px; display: flex; align-items: center; justify-content: space-between; padding: 0 6px 0 5px; font-size: 5px; font-weight: 500; }
.bal em { font-style: normal; font-size: 3px; line-height: 9px; width: 23px; text-align: center; background: #40464d; border-radius: 1px; }
.duo { display: grid; grid-template-columns: 1fr 1fr; gap: 3px; margin-top: 4px; }
.ghost { background: #fff; color: #10171f; border: 1px solid #d5d8da; }
.frame h6 { font-size: 4px; line-height: 5px; margin: 6px 0 3px; }
.stats { display: grid; grid-template-columns: 1fr 1fr; grid-auto-rows: 16px; gap: 2px 3px; font-size: 3px; line-height: 5px; color: #555; }
.stats span { background: #f4f5f5; border-radius: 2px; padding: 2px 3px; }
.stats b { display: block; font-size: 4px; line-height: 6px; color: #10171f; }
.col { margin-top: 8px; }
.yc { text-align: center; font-weight: 600; margin: 2px 0; }

/* kit frame columns */
.styles { left: 32px; top: 29px; }
.styles p { height: 14px; line-height: 14px; }
.h1 { font-size: 6px; font-weight: 700; }
.h2 { font-size: 5px; font-weight: 700; }
.h3 { font-size: 5px; font-weight: 500; }
.bt { font-weight: 700; }
.styles .ca { font-size: 3px; }
.sw { display: block; width: 25px; height: 25px; margin-bottom: 8px; }
.ink { background: #10171f; }
.mid { background: #86898d; }
.pale { background: #e2e2e2; }
.ios { left: 90px; top: 32px; width: 104px; }
.ios .stat { padding: 0 14px 0 8px; }
.ios .home { display: block; margin: 12px auto 10px; }
.dash { border: 1px dashed #b9f5a3; padding: 4px; display: grid; gap: 7px; }
.dash > * { margin: 0; }
.dash .pad { height: 67px; }
.icons { left: 209px; top: 16px; width: 39px; height: 143px; border: 1px dashed #b9f5a3; padding-top: 11px; display: grid; grid-auto-rows: 12px; place-items: center; }
.icons .rt { margin: 0; }
.parts { left: 263px; top: 32px; width: 94px; display: flex; flex-direction: column; }
.parts > * { flex: none; }
.parts .in6 { margin-left: 6px; margin-right: 6px; }
.dash2 { height: 44px; border: 1px dashed #b9f5a3; padding: 4px 5px; display: flex; flex-direction: column; }
.dash2 .link { margin-top: 12px; }
.parts .ttl { margin: 11px 6px 0; }
.parts .nav { margin-top: 8px; }
.parts .g10 { margin-top: 10px; }
.parts .tel, .parts .pins, .parts .find { margin-top: 15px; }
.parts hr { margin: 13px 0 0; }
.parts .bank { margin-top: 10px; }
.parts .friend, .parts .who, .parts .duo { margin-top: 7px; }
.parts .chip { align-self: flex-start; margin-top: 8px; }
.parts .off { margin-left: 14px; }
.parts .plain { margin: 8px 0 0; }
.plain b { color: #10171f; }
.plain b:first-child { border-bottom: 1px solid #a9acae; }
.parts .leg, .parts .opt { margin-top: 8px; }
```
